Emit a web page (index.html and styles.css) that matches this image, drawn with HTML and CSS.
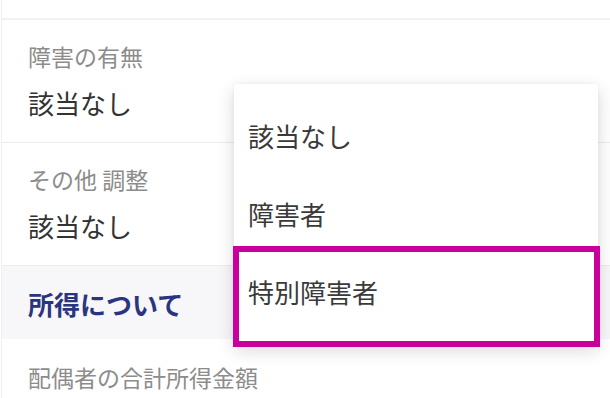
FILE: index.html
```html
<!DOCTYPE html>
<html lang="ja">
<head>
<meta charset="utf-8">
<link rel="stylesheet" href="styles.css">
</head>
<body>
<div class="page">
  <div class="top-gap"></div>
  <div class="field">
    <div class="label">障害の有無</div>
    <div class="value">該当なし</div>
  </div>
  <div class="field">
    <div class="label">その他 調整</div>
    <div class="value">該当なし</div>
  </div>
  <div class="section">所得について</div>
  <div class="field last">
    <div class="label">配偶者の合計所得金額</div>
  </div>
</div>
<div class="menu">
  <div class="item">該当なし</div>
  <div class="item">障害者</div>
  <div class="item">特別障害者</div>
</div>
<div class="highlight"></div>
</body>
</html>
```
FILE: styles.css
```css
html, body {
  margin: 0;
  padding: 0;
  background: #ffffff;
}
body {
  width: 610px;
  height: 398px;
  overflow: hidden;
  position: relative;
  font-family: "Noto Sans CJK JP", "Noto Sans", sans-serif;
}
.page {
  margin-left: 1px;
  border-left: 1px solid #f0f0f0;
}
.top-gap {
  height: 18px;
  border-bottom: 2px solid #f1f1f1;
}
.field {
  padding: 21px 27px 22px 26px;
  border-bottom: 1px solid #ececec;
}
.field.last {
  border-bottom: none;
  padding-top: 23px;
}
.label {
  font-size: 23px;
  line-height: 30px;
  color: #8c8c8c;
}
.value {
  margin-top: 15px;
  font-size: 26px;
  line-height: 34px;
  color: #333333;
}
.section {
  background: #f7f7f9;
  padding: 21px 26px 18px;
  font-size: 26px;
  line-height: 34px;
  font-weight: 700;
  color: #2a3480;
}
.menu {
  position: absolute;
  left: 234px;
  top: 84px;
  width: 364px;
  height: 260px;
  box-sizing: border-box;
  padding: 13px 0;
  background: #ffffff;
  border-radius: 4px;
  box-shadow: 0 6px 18px rgba(0, 0, 0, 0.16), 0 0 4px rgba(0, 0, 0, 0.05);
}
.item {
  height: 78px;
  line-height: 78px;
  padding-left: 14px;
  font-size: 26px;
  color: #3a3a3a;
}
.highlight {
  position: absolute;
  left: 233px;
  top: 246px;
  width: 367px;
  height: 101px;
  box-sizing: border-box;
  border: 6px solid #c9009b;
}
```
